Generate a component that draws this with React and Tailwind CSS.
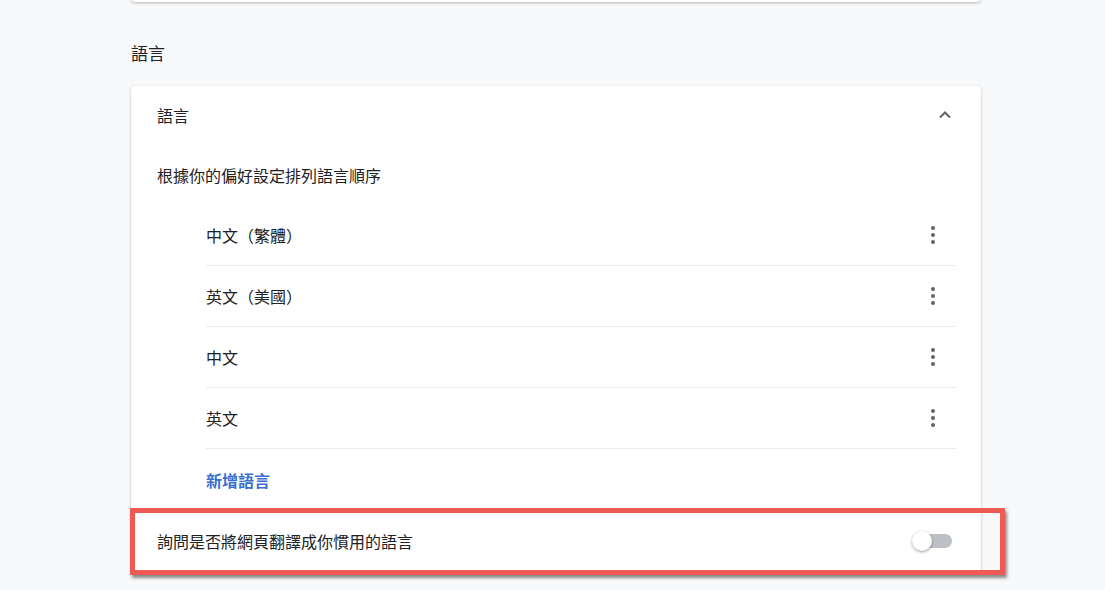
import React from "react";

const font = { fontFamily: '"Noto Sans CJK TC", "Noto Sans", sans-serif' };

function Dots() {
  return (
    <svg width="20" height="20" viewBox="0 0 20 20" className="text-[#5f6368]">
      <circle cx="10" cy="3" r="2" fill="currentColor" />
      <circle cx="10" cy="10" r="2" fill="currentColor" />
      <circle cx="10" cy="17" r="2" fill="currentColor" />
    </svg>
  );
}

function LangRow({ label, last }) {
  return (
    <div className={`flex h-[61px] items-center justify-between ${last ? "" : "border-b border-[#e8eaed]"}`}>
      <span>{label}</span>
      <div className="mr-[13px]">
        <Dots />
      </div>
    </div>
  );
}

export default function App() {
  return (
    <div
      className="w-[1105px] h-[590px] overflow-hidden bg-[#f8f9fa] text-[#202124] text-[16px] leading-none"
      style={font}
    >
      <div className="ml-[131px] w-[850px] flex flex-col">
        <div className="-mt-[20px] h-[22px] rounded-b bg-white shadow-[0_1px_3px_rgba(60,64,67,0.35)]" />
        <div className="h-[84px] flex items-center pt-[16px] text-[17px]">語言</div>
        <div className="h-[486px] rounded-[4px] bg-white shadow-[0_1px_3px_rgba(60,64,67,0.3),0_1px_1px_rgba(60,64,67,0.1)]">
          <div className="flex h-[58px] items-center justify-between pl-[26px] pr-[28px]">
            <span>語言</span>
            <svg width="16" height="16" viewBox="0 0 16 16">
              <path d="M3 10.5 L8 5.5 L13 10.5" fill="none" stroke="#5f6368" strokeWidth="2" />
            </svg>
          </div>
          <div className="flex h-[61px] items-center pl-[26px]">根據你的偏好設定排列語言順序</div>
          <div className="pl-[75px] pr-[25px]">
            <LangRow label="中文（繁體）" />
            <LangRow label="英文（美國）" />
            <LangRow label="中文" />
            <LangRow label="英文" />
            <div className="flex h-[61px] items-center font-bold text-[#3a6fd0]">新增語言</div>
          </div>
          <div className="relative flex h-[62px] items-center justify-between pl-[26px] pr-[29px]">
            <span>詢問是否將網頁翻譯成你慣用的語言</span>
            <div className="relative h-[20px] w-[40px] flex items-center">
              <div className="ml-[3px] h-[14px] w-[37px] rounded-full bg-[#bdc1c6]" />
              <div className="absolute left-0 top-0 h-[20px] w-[20px] rounded-full bg-white shadow-[0_1px_3px_rgba(0,0,0,0.4)]" />
            </div>
            <div className="pointer-events-none absolute -left-[1px] top-[-2px] h-[67px] w-[875px] border-[5px] border-[#f05a55] shadow-[2px_3px_3px_rgba(0,0,0,0.45)]" />
          </div>
        </div>
      </div>
    </div>
  );
}
